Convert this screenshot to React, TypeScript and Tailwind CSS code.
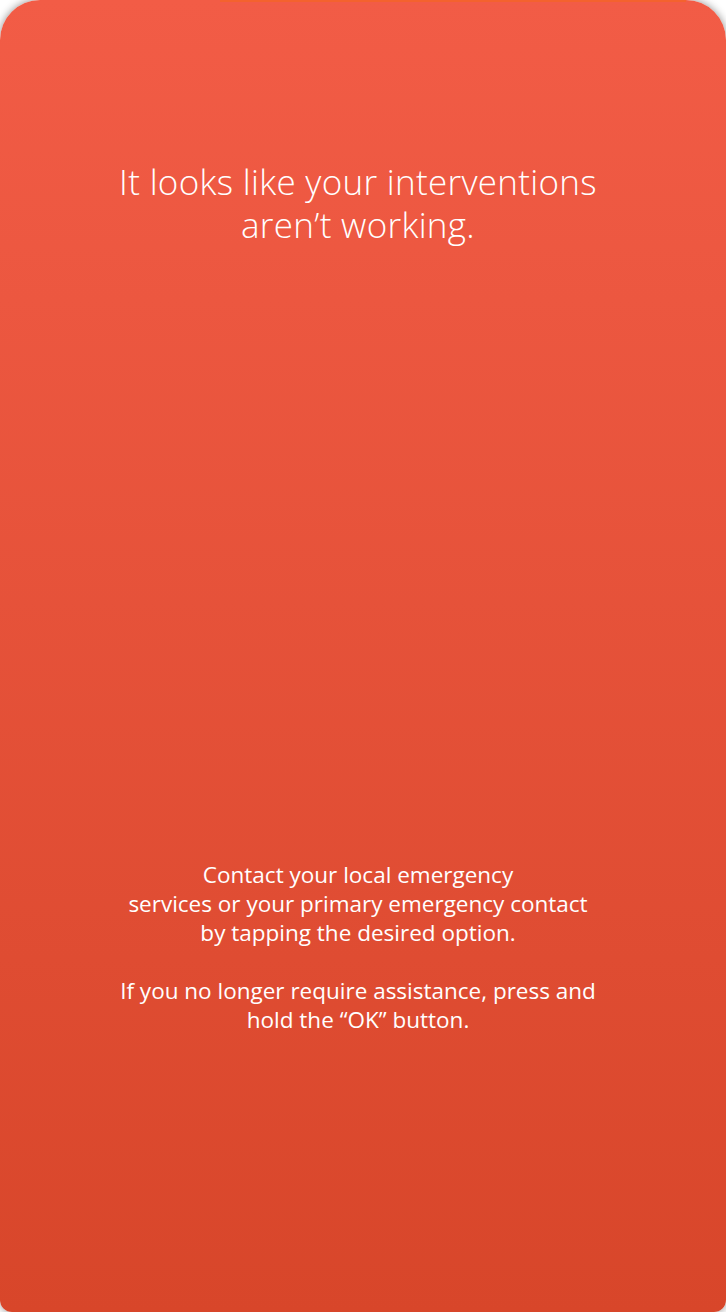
import React from "react";

export default function App() {
  return (
    <div className="w-[726px] h-[1312px] bg-white relative overflow-hidden">
      <div
        className="relative w-[726px] h-[1312px] pr-[10px] rounded-t-[40px] rounded-b-[12px] bg-gradient-to-b from-[#f25c46] to-[#d8462a] shadow-[0_0_8px_rgba(0,0,0,0.45)] flex flex-col items-center text-white text-center"
        style={{ fontFamily: '"Open Sans", "Noto Sans", sans-serif' }}
      >
        <div className="absolute top-0 left-[220px] right-[40px] h-[2px] bg-[#f4622e]" />
        <h1 className="mt-[160px] text-[35px] leading-[43px] font-light tracking-[0.3px]">
          It looks like your interventions
          <br />
          aren’t working.
        </h1>
        <div className="mt-[614px] text-[22.5px] leading-[29px] font-normal">
          <p>
            Contact your local emergency
            <br />
            services or your primary emergency contact
            <br />
            by tapping the desired option.
          </p>
          <p className="mt-[29px]">
            If you no longer require assistance, press and
            <br />
            hold the “OK” button.
          </p>
        </div>
      </div>
    </div>
  );
}
